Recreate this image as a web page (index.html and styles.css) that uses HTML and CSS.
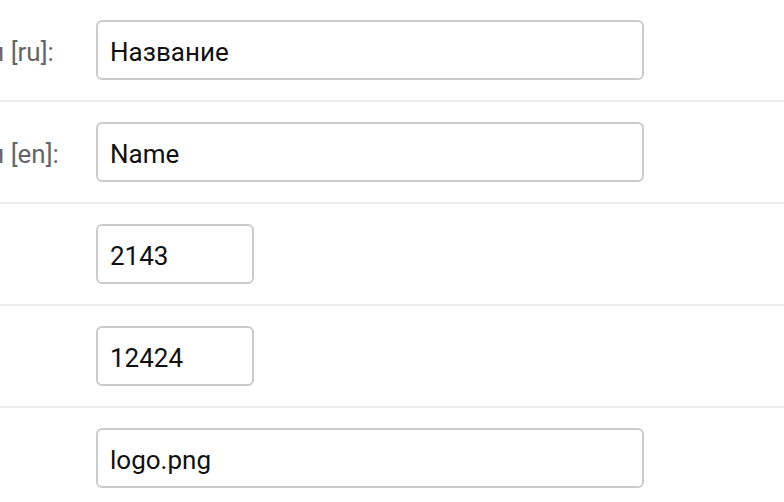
FILE: index.html
```html
<!DOCTYPE html>
<html lang="ru">

<head>
    <meta charset="UTF-8">
    <title>Компания</title>
    <link rel="stylesheet" href="styles.css">
</head>

<body>
    <form id="company_form">
        <div class="row">
            <label class="label" for="name_ru">Название компании [ru]:</label>
            <input class="field wide" id="name_ru" type="text" value="Название">
        </div>
        <div class="row">
            <label class="label" for="name_en">Название компании [en]:</label>
            <input class="field wide" id="name_en" type="text" value="Name">
        </div>
        <div class="row">
            <label class="label" for="inn">ИНН:</label>
            <input class="field short" id="inn" type="text" value="2143">
        </div>
        <div class="row">
            <label class="label" for="kpp">КПП:</label>
            <input class="field short" id="kpp" type="text" value="12424">
        </div>
        <div class="row">
            <label class="label" for="logo">Логотип:</label>
            <input class="field wide" id="logo" type="text" value="logo.png">
        </div>
    </form>
</body>

</html>
```

FILE: styles.css
```css
* {
    margin: 0;
    padding: 0;
    box-sizing: border-box;
}

html,
body {
    overflow: hidden;
    background-color: #fff;
}

body {
    font-family: Roboto, "Noto Sans", sans-serif;
    font-size: 26px;
    color: #111;
}

/* форма прокручена вправо, начало подписей за краем */
#company_form {
    margin-left: -243px;
    width: 1100px;
}

.row {
    display: flex;
    align-items: center;
    height: 102px;
    padding: 20px 0;
    border-bottom: 2px solid #ececec;
}

.label {
    flex: 0 0 339px;
    padding-top: 3px;
    color: #666;
    white-space: nowrap;
}

.field {
    height: 60px;
    padding: 3px 12px 0;
    border: 2px solid #cbcbcb;
    border-radius: 6px;
    background-color: #fff;
    font-family: Roboto, "Noto Sans", sans-serif;
    font-size: 26px;
    color: #111;
    outline: none;
}

.wide {
    width: 548px;
}

.short {
    width: 158px;
}
```
